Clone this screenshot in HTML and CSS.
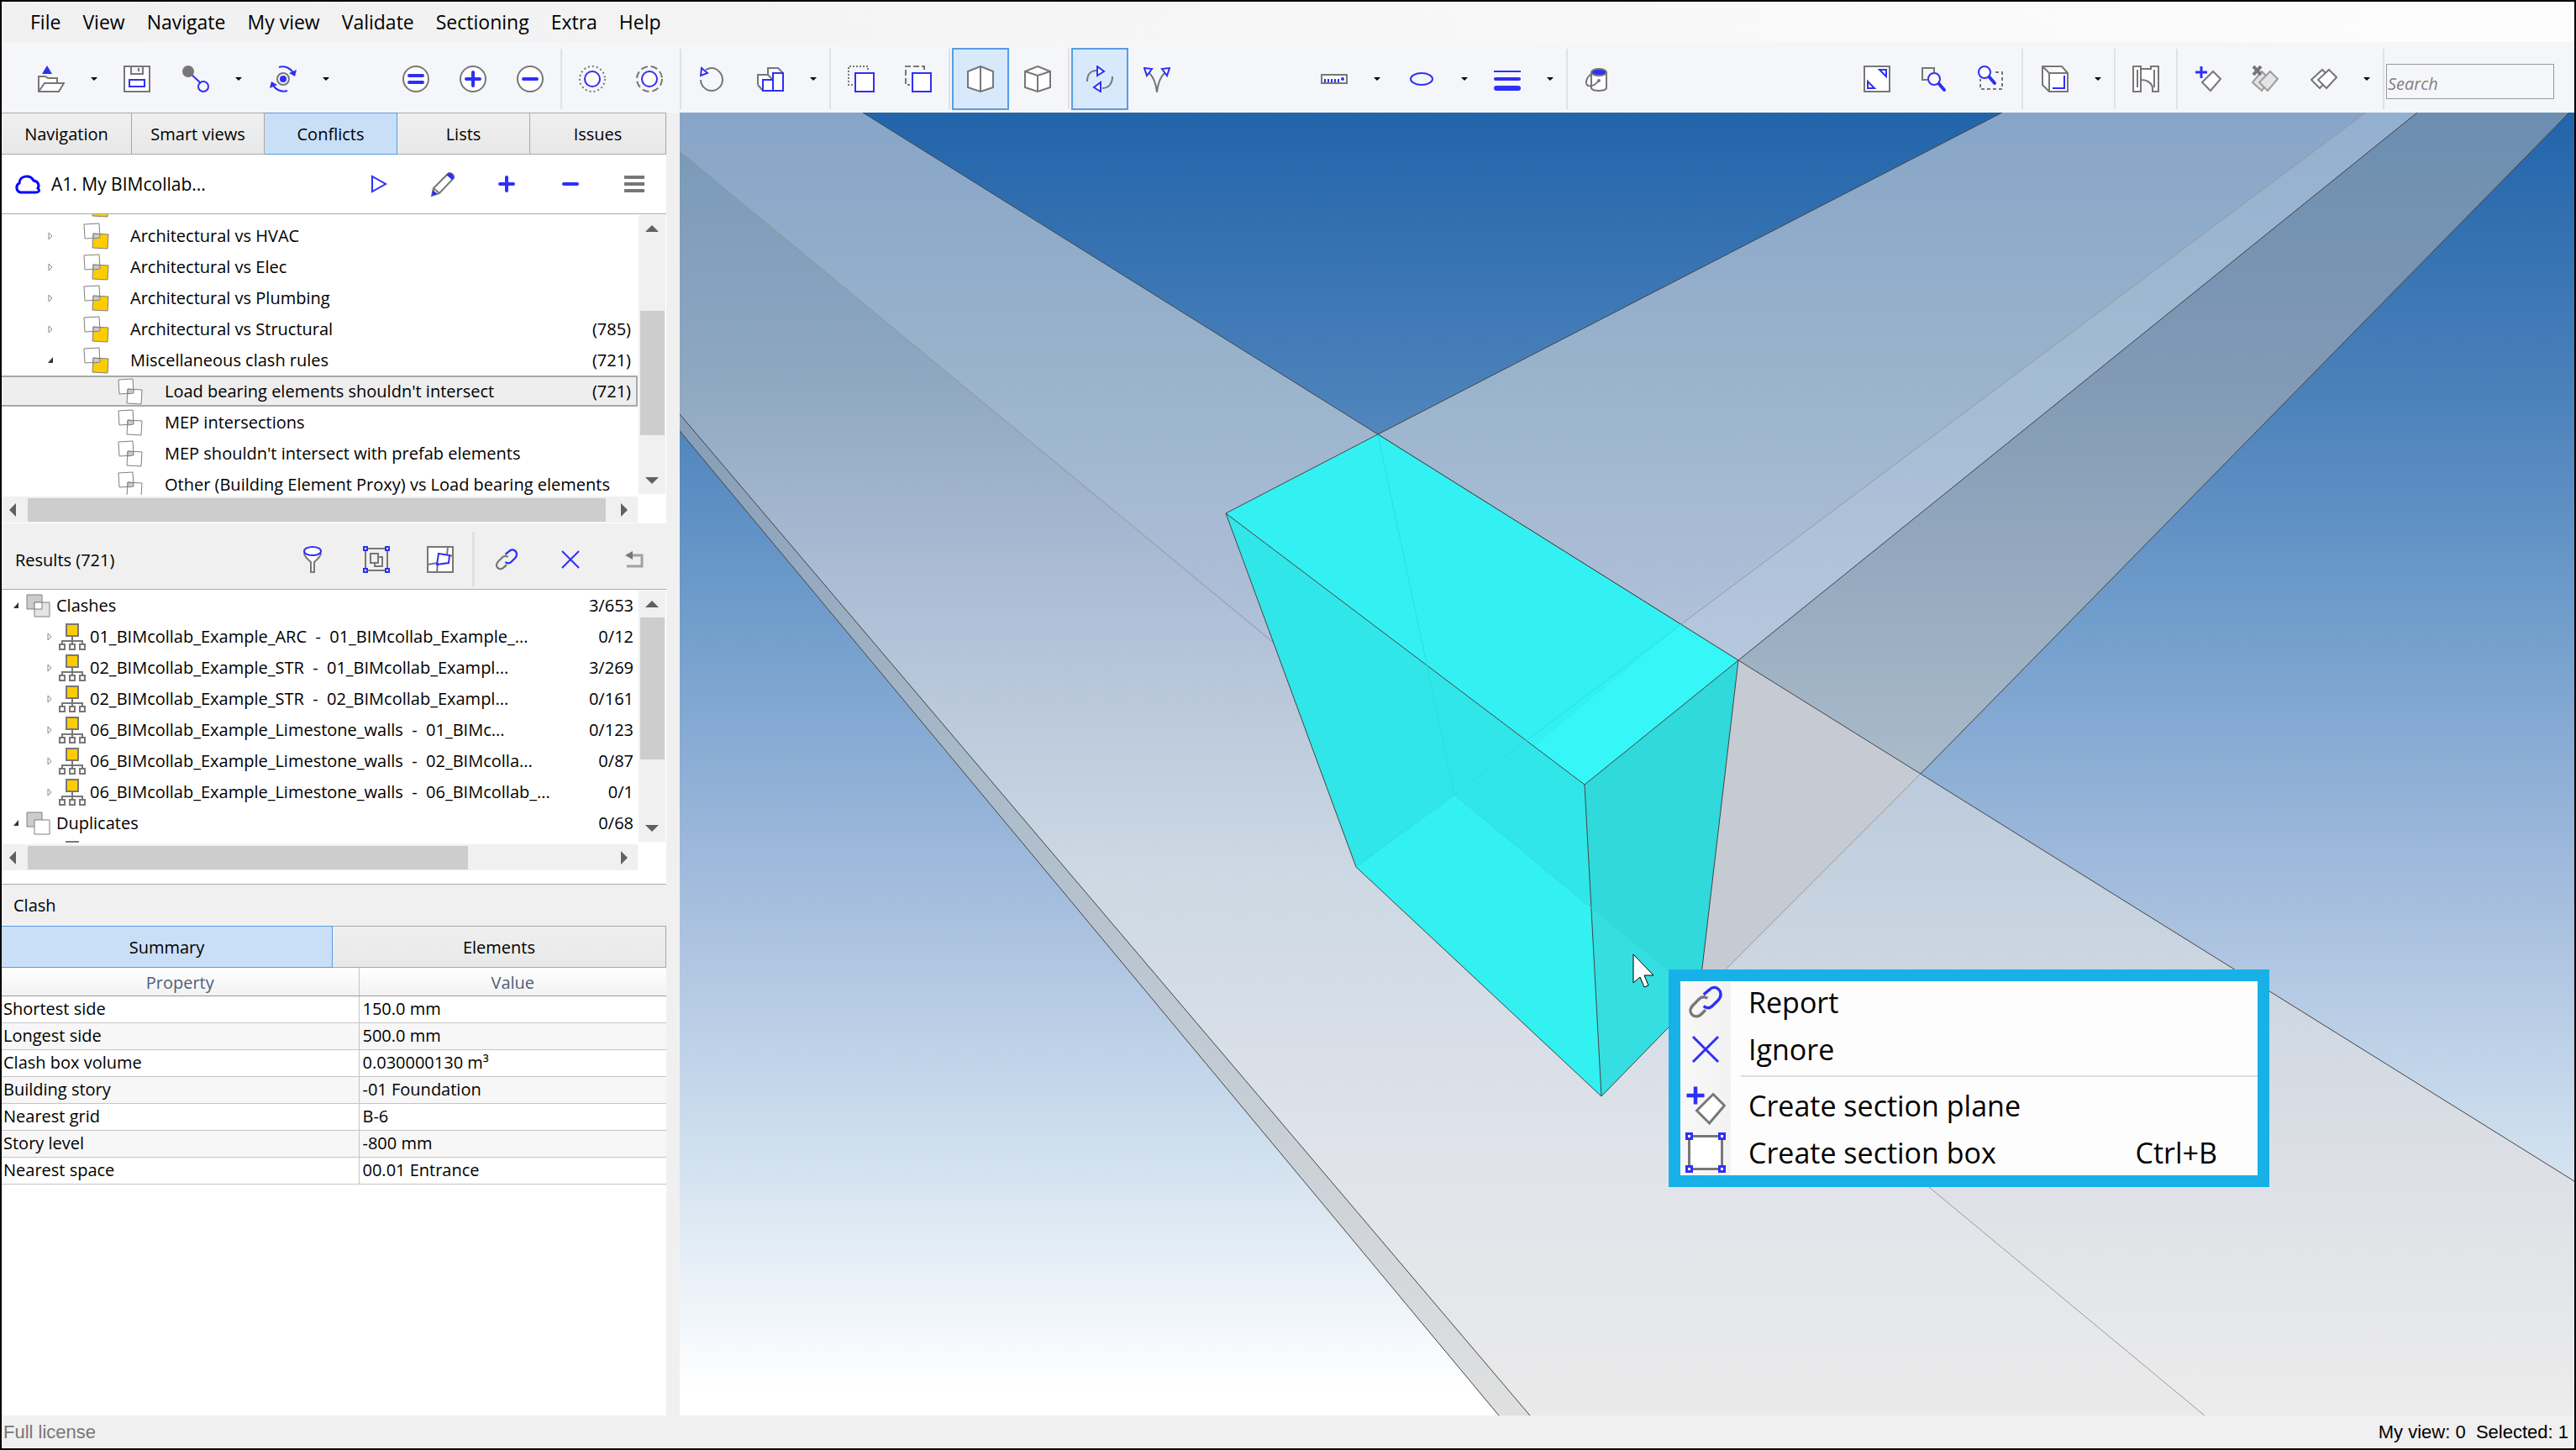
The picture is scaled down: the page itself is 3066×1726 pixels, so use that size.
FILE: index.html
```
<!DOCTYPE html>
<html lang="en">
<head>
    <meta charset="UTF-8">
    <meta name="viewport" content="width=device-width, initial-scale=1.0">
    <title>BIMcollab Zoom</title>
    <link rel="stylesheet" href="styles.css">
</head>
<body>
    <!-- Shared icons -->
    <svg class="sprite" aria-hidden="true">
        <symbol id="closed" viewBox="0 0 8 12"><path class="thin" d="M2 2v8l4-4z"/></symbol>
        <symbol id="open" viewBox="0 0 8 12"><path d="M7 2v7H1z" fill="#333"/></symbol>
        <symbol id="rule-set" viewBox="0 0 32 32">
            <path class="thin" d="M1 2l18-1 1 17-18 1z" fill="#fff"/>
            <path class="thin" d="M12 13l18 1-1 17-18-1z" fill="#fc0"/>
            <path class="thin" d="M12 13l8 1v4l-8 1z" fill="#ccc"/>
        </symbol>
        <symbol id="rule" viewBox="0 0 32 32">
            <path class="thin" d="M1 2l17-1 1 17-17 1z" fill="#fff"/>
            <path class="thin" d="M12 13l17 1-1 17-17-1z" fill="#fff"/>
            <path class="thin" d="M12 13l7 1v4l-7 1z" fill="#ccc"/>
        </symbol>
        <symbol id="clash" viewBox="0 0 32 32">
            <path class="thin" d="M2 3h18v17H2z" fill="#ccc"/>
            <path class="thin" d="M11 12h18v17H11z" fill="#e4e4e4"/>
            <path class="thin" d="M11 12h9v8h-9z" fill="#fff"/>
        </symbol>
        <symbol id="duplicate" viewBox="0 0 32 32">
            <path class="thin" d="M2 3h18v17H2z" fill="#ccc"/>
            <path class="thin" d="M11 12h18v17H11z" fill="#fff"/>
        </symbol>
        <symbol id="group" viewBox="0 0 32 32">
            <path class="g" d="M16 15v7M4 25v-4h24v4M16 21v4"/>
            <path class="g" d="M9 1h14v14H9z" style="fill:#fc0"/>
            <path class="g" d="M1 25h6v6H1zM13 25h6v6h-6zM25 25h6v6h-6z"/>
        </symbol>
        <symbol id="link" viewBox="-5 -5 42 42">
            <path class="g b3" d="M18 12c-3-2-6-2-9 1l-6 6c-4 4-3 8-1 10s6 3 10-1l4-4"/>
            <path class="b3" d="M14 8l6-5c4-4 8-2 10 0s3 7-1 11l-6 6c-3 3-7 2-9 0"/>
        </symbol>
        <symbol id="cross" viewBox="0 0 32 32"><path class="b" d="M6 6l20 20M26 6L6 26"/></symbol>
        <symbol id="plane-add" viewBox="0 0 32 32">
            <path class="g w" d="M22 7l9 9-12 14-10-10z"/>
            <path class="b3" d="M8 1v14M1 8h14"/>
        </symbol>
    </svg>

    <nav class="menubar">
        <a href="#">File</a>
        <a href="#">View</a>
        <a href="#">Navigate</a>
        <a href="#">My view</a>
        <a href="#">Validate</a>
        <a href="#">Sectioning</a>
        <a href="#">Extra</a>
        <a href="#">Help</a>
    </nav>

    <header class="toolbar">
        <div class="group group-file">
            <button class="tool split" aria-label="Open"><svg viewBox="0 0 32 32"><path d="M11 0l6 10H5z" fill="#2f2ff5"/><path class="g w" d="M1 31V13h8l3 2h11v6"/><path class="g w" d="M1 31l7-10h23l-6 10z"/></svg></button>
            <button class="caret" aria-label="Open options"></button>
            <button class="tool" aria-label="Save"><svg viewBox="0 0 32 32"><path class="g w" d="M1 1h30v30H1zM9 1v9h14V1M18 3v4"/><path class="b w" d="M7 17h18v8H7z"/></svg></button>
            <button class="tool split" aria-label="Connect"><svg viewBox="0 0 32 32"><path class="b" d="M9 9l13 12"/><circle cx="7" cy="7" r="7" fill="#777"/><circle class="b" cx="25" cy="25" r="6"/></svg></button>
            <button class="caret" aria-label="Connect options"></button>
            <button class="tool split" aria-label="Synchronise"><svg viewBox="0 0 32 32"><circle class="g" cx="16" cy="16" r="7"/><circle cx="16" cy="16" r="4" fill="#2f2ff5"/><path class="b" d="M11 2c7-2 14 1 17 7M21 30c-7 2-14-1-17-7"/><path d="M32 5l-2 8-7-4zM0 27l2-8 7 4z" fill="#2f2ff5"/></svg></button>
            <button class="caret" aria-label="Synchronise options"></button>
        </div>
        <div class="group">
            <button class="tool" aria-label="Equal"><svg viewBox="0 0 32 32"><circle class="g w" cx="16" cy="16" r="15"/><path class="b4" d="M8 12h16M8 20h16"/></svg></button>
            <button class="tool" aria-label="Add"><svg viewBox="0 0 32 32"><circle class="g w" cx="16" cy="16" r="15"/><path class="b4" d="M16 8v16M8 16h16"/></svg></button>
            <button class="tool" aria-label="Subtract"><svg viewBox="0 0 32 32"><circle class="g w" cx="16" cy="16" r="15"/><path class="b4" d="M8 16h16"/></svg></button>
            <span class="sep"></span>
            <button class="tool" aria-label="Select dotted"><svg viewBox="0 0 32 32"><circle class="g" cx="16" cy="16" r="15" stroke-dasharray="2 3"/><circle class="b w" cx="16" cy="16" r="9"/></svg></button>
            <button class="tool" aria-label="Select dashed"><svg viewBox="0 0 32 32"><circle class="g" cx="16" cy="16" r="15" stroke-dasharray="8 4"/><circle class="b w" cx="16" cy="16" r="9"/></svg></button>
            <span class="sep"></span>
            <button class="tool" aria-label="Undo"><svg viewBox="0 0 32 32"><path class="g" d="M3 17c0 7 6 13 13 13s13-6 13-13S23 3 16 3c-3 0-5 1-7 2"/><path class="b w" d="M4 3l7 6-8 3z"/></svg></button>
            <button class="tool split" aria-label="Buildings"><svg viewBox="0 0 32 32"><path class="g w" d="M1 23V11h12V3h12l6 6v12M1 23l6 7M1 11h12l6 6"/><path class="b w" d="M7 30V17h12V9h12v21zM19 17v13"/></svg></button>
            <button class="caret" aria-label="Building options"></button>
            <span class="sep"></span>
            <button class="tool" aria-label="Box dotted"><svg viewBox="0 0 32 32"><path class="g" d="M24 5V1H1v22h7" stroke-dasharray="2 2"/><path class="b w" d="M9 9h22v22H9z"/></svg></button>
            <button class="tool" aria-label="Box dashed"><svg viewBox="0 0 32 32"><path class="g" d="M23 5V1H1v22h5" stroke-dasharray="7 3"/><path class="b w" d="M9 9h22v22H9z"/></svg></button>
            <span class="sep"></span>
            <button class="tool active" aria-label="Perspective"><svg viewBox="0 0 32 32"><path class="g w" d="M16 1l15 6v19l-15 5-15-5V7zM16 1v30"/></svg></button>
            <button class="tool" aria-label="Isometric"><svg viewBox="0 0 32 32"><path class="g w" d="M16 1l15 6v19l-15 5-15-5V7zM1 7l15 5 15-5M16 12v19"/></svg></button>
            <span class="sep"></span>
            <button class="tool active" aria-label="Orbit"><svg viewBox="0 0 32 32"><path class="g" d="M1 19C1 11 5 6 12 6M31 13c0 8-4 14-12 14"/><path class="b w" d="M13 1l8 6-8 5zM17 20v11l-8-5z"/></svg></button>
            <button class="tool" aria-label="Fly"><svg viewBox="0 0 32 32"><path class="g" d="M7 9c5 5 8 13 9 23 1-10 4-18 9-23"/><path class="b w" d="M1 3l9 1-6 8zM31 3l-9 1 6 8z"/></svg></button>
        </div>
        <div class="group group-draw">
            <button class="tool split" aria-label="Measure"><svg viewBox="0 0 32 32"><path class="g w" d="M1 11h30v10H1z"/><path class="b" d="M5 16v4M9 16v4M13 16v4M17 16v4M21 16v4"/><circle cx="26" cy="16" r="2" fill="#2f2ff5"/></svg></button>
            <button class="caret" aria-label="Measure options"></button>
            <button class="tool split" aria-label="Markup"><svg viewBox="0 0 32 32"><ellipse class="b" cx="16" cy="16" rx="13" ry="7"/></svg></button>
            <button class="caret" aria-label="Markup options"></button>
            <button class="tool" aria-label="Line width"><svg viewBox="0 0 32 32"><path class="b" d="M0 7h32"/><path class="b4" d="M2 16h28"/><path class="b6" d="M3 27h26"/></svg></button>
            <button class="caret" aria-label="Line width options"></button>
            <span class="sep"></span>
            <button class="tool" aria-label="Paint"><svg viewBox="0 0 32 32"><path class="g w" d="M8 8v19c2 4 16 4 18 0V8"/><ellipse class="g" cx="17" cy="8" rx="9" ry="4" style="fill:#2f2ff5"/><path class="g" d="M8 10c-6 4-8 12-4 14 4 1 9-1 13-6"/><circle cx="17" cy="18" r="2" fill="#777"/></svg></button>
        </div>
        <div class="group group-view">
            <button class="tool" aria-label="Fit"><svg viewBox="0 0 32 32"><path class="g w" d="M1 1h30v30H1z"/><path class="b" d="M19 5h8v8zM5 19v8h8z"/></svg></button>
            <button class="tool" aria-label="Zoom object"><svg viewBox="0 0 32 32"><path class="g" d="M8 17H2V3h14v5"/><circle class="b w" cx="16" cy="16" r="7"/><path class="b4" d="M22 22l6 7"/></svg></button>
            <button class="tool" aria-label="Zoom window"><svg viewBox="0 0 32 32"><path class="g" d="M21 8h8v20H3V16" stroke-dasharray="4 3"/><circle class="b w" cx="8" cy="8" r="7"/><path class="b4" d="M14 14l6 7"/></svg></button>
            <span class="sep"></span>
            <button class="tool split" aria-label="View cube"><svg viewBox="0 0 32 32"><path class="g w" d="M1 1h23l7 8v22H9l-8-8zM1 1l8 8h22M9 9v22"/><path class="b" d="M27 12v15H13"/></svg></button>
            <button class="caret" aria-label="View options"></button>
            <span class="sep"></span>
            <button class="tool" aria-label="Walls"><svg viewBox="0 0 32 32"><path class="g w" d="M1 1h9v3h12V1h9v30h-7v-5c-1-5-6-9-14-9v14H1zM6 5v21M26 5v21M10 4v13"/></svg></button>
            <span class="sep"></span>
            <button class="tool" aria-label="Add section plane"><svg><use href="#plane-add"/></svg></button>
            <button class="tool" aria-label="Remove section planes"><svg viewBox="0 0 32 32"><g opacity=".7"><path class="g" d="M12 7l9 9-9 14L1 20z" style="fill:#ddd"/><path class="g" d="M22 7l9 9-12 14L9 20z" style="fill:#ddd"/></g><path d="M2 1l9 10M11 1L2 11" stroke="#777" stroke-width="4"/></svg></button>
            <button class="tool split" aria-label="Section planes"><svg viewBox="0 0 32 32"><path class="g w" d="M14 5l9 9-12 13L1 17z"/><path class="g w" d="M22 5l9 9-12 13-10-10z"/></svg></button>
            <button class="caret" aria-label="Section options"></button>
            <span class="sep"></span>
            <input class="search" type="text" placeholder="Search" aria-label="Search">
        </div>
    </header>

    <main class="workspace">
        <aside class="sidebar">
            <div class="tabs main-tabs">
                <button>Navigation</button>
                <button>Smart views</button>
                <button class="selected">Conflicts</button>
                <button>Lists</button>
                <button>Issues</button>
            </div>

            <div class="panel-bar rules-bar">
                <svg class="cloud" viewBox="0 0 32 32"><path d="M7 26a6 6 0 0 1-1-11c0-9 13-11 17-3 6 1 7 6 5 9 3 3 1 5-2 5z" fill="none" stroke="#0000ff" stroke-width="3"/></svg>
                <span class="panel-name">A1. My BIMcollab...</span>
                <button class="act" aria-label="Run"><svg viewBox="0 0 32 32"><path class="b w" d="M8 7v18l16-9z"/></svg></button>
                <button class="act" aria-label="Edit"><svg viewBox="0 0 32 32"><path class="g w" d="M22 4c2-3 8 1 7 5L12 27l-9 3 2-9z"/><path d="M22 4c2-3 8 1 7 5l-2 2-7-6zM3 30l1-7 6 5z" fill="#2f2ff5"/><path class="g" d="M5 21l7 6"/></svg></button>
                <button class="act" aria-label="Add rule"><svg viewBox="0 0 32 32"><path class="b4" d="M16 8v16M8 16h16"/></svg></button>
                <button class="act" aria-label="Remove rule"><svg viewBox="0 0 32 32"><path class="b4" d="M8 16h16"/></svg></button>
                <button class="act" aria-label="Menu"><svg viewBox="0 0 32 32"><path d="M4 8h24M4 16h24M4 24h24" stroke="#777" stroke-width="4"/></svg></button>
            </div>

            <section class="pane rules">
                <ul class="tree">
                    <li class="scrolled"><svg class="icon"><use href="#rule-set"/></svg></li>
                    <li><svg class="toggle"><use href="#closed"/></svg><svg class="icon"><use href="#rule-set"/></svg><span>Architectural vs HVAC</span></li>
                    <li><svg class="toggle"><use href="#closed"/></svg><svg class="icon"><use href="#rule-set"/></svg><span>Architectural vs Elec</span></li>
                    <li><svg class="toggle"><use href="#closed"/></svg><svg class="icon"><use href="#rule-set"/></svg><span>Architectural vs Plumbing</span></li>
                    <li><svg class="toggle"><use href="#closed"/></svg><svg class="icon"><use href="#rule-set"/></svg><span>Architectural vs Structural</span><b>(785)</b></li>
                    <li><svg class="toggle"><use href="#open"/></svg><svg class="icon"><use href="#rule-set"/></svg><span>Miscellaneous clash rules</span><b>(721)</b></li>
                    <li class="child current"><svg class="icon"><use href="#rule"/></svg><span>Load bearing elements shouldn't intersect</span><b>(721)</b></li>
                    <li class="child"><svg class="icon"><use href="#rule"/></svg><span>MEP intersections</span></li>
                    <li class="child"><svg class="icon"><use href="#rule"/></svg><span>MEP shouldn't intersect with prefab elements</span></li>
                    <li class="child"><svg class="icon"><use href="#rule"/></svg><span>Other (Building Element Proxy) vs Load bearing elements</span></li>
                </ul>
                <div class="vbar"><i class="up"></i><i class="thumb"></i><i class="down"></i></div>
                <div class="hbar"><i class="left"></i><i class="thumb"></i><i class="right"></i></div>
            </section>

            <div class="panel-bar results-bar">
                <span class="panel-name">Results (721)</span>
                <button class="act" aria-label="Filter"><svg viewBox="0 0 32 32"><path class="g w" d="M6 8c0 5 4 7 8 11v12h4V19c4-4 8-6 8-11"/><ellipse class="b w" cx="16" cy="6" rx="10" ry="5"/></svg></button>
                <button class="act" aria-label="Group results"><svg viewBox="0 0 32 32"><path class="g" d="M3 3h26v26H3zM9 9h9v11H9zM18 13h5v11h-9v-4"/><path class="b w" d="M1 1h4v4H1zM27 1h4v4h-4zM1 27h4v4H1zM27 27h4v4h-4z"/></svg></button>
                <button class="act" aria-label="Show on map"><svg viewBox="0 0 32 32"><path class="g w" d="M1 1h30v30H1zM1 22l12-2M27 11l4 1M25 1l-1 9M12 31l1-11"/><path class="b" d="M14 9l13 2-1 9-14 2z"/></svg></button>
                <span class="sep"></span>
                <button class="act" aria-label="Report"><svg><use href="#link"/></svg></button>
                <button class="act" aria-label="Ignore"><svg><use href="#cross"/></svg></button>
                <button class="act" aria-label="Restore"><svg viewBox="0 0 32 32"><path d="M10 11h15v13H7" fill="none" stroke="#a0a0a0" stroke-width="3"/><path d="M5 11l9-5v10z" fill="#777"/></svg></button>
            </div>

            <section class="pane results">
                <ul class="tree">
                    <li><svg class="toggle"><use href="#open"/></svg><svg class="icon"><use href="#clash"/></svg><span>Clashes</span><b>3/653</b></li>
                    <li class="child"><svg class="toggle"><use href="#closed"/></svg><svg class="icon"><use href="#group"/></svg><span>01_BIMcollab_Example_ARC  -  01_BIMcollab_Example_...</span><b>0/12</b></li>
                    <li class="child"><svg class="toggle"><use href="#closed"/></svg><svg class="icon"><use href="#group"/></svg><span>02_BIMcollab_Example_STR  -  01_BIMcollab_Exampl...</span><b>3/269</b></li>
                    <li class="child"><svg class="toggle"><use href="#closed"/></svg><svg class="icon"><use href="#group"/></svg><span>02_BIMcollab_Example_STR  -  02_BIMcollab_Exampl...</span><b>0/161</b></li>
                    <li class="child"><svg class="toggle"><use href="#closed"/></svg><svg class="icon"><use href="#group"/></svg><span>06_BIMcollab_Example_Limestone_walls  -  01_BIMc...</span><b>0/123</b></li>
                    <li class="child"><svg class="toggle"><use href="#closed"/></svg><svg class="icon"><use href="#group"/></svg><span>06_BIMcollab_Example_Limestone_walls  -  02_BIMcolla...</span><b>0/87</b></li>
                    <li class="child"><svg class="toggle"><use href="#closed"/></svg><svg class="icon"><use href="#group"/></svg><span>06_BIMcollab_Example_Limestone_walls  -  06_BIMcollab_...</span><b>0/1</b></li>
                    <li><svg class="toggle"><use href="#open"/></svg><svg class="icon"><use href="#duplicate"/></svg><span>Duplicates</span><b>0/68</b></li>
                    <li class="child"><svg class="toggle"><use href="#closed"/></svg><svg class="icon"><use href="#group"/></svg></li>
                </ul>
                <div class="vbar"><i class="up"></i><i class="thumb"></i><i class="down"></i></div>
                <div class="hbar"><i class="left"></i><i class="thumb"></i><i class="right"></i></div>
            </section>

            <h2>Clash</h2>
            <div class="tabs detail-tabs">
                <button class="selected">Summary</button>
                <button>Elements</button>
            </div>
            <table class="props">
                <thead>
                    <tr><th>Property</th><th>Value</th></tr>
                </thead>
                <tbody>
                    <tr><td>Shortest side</td><td>150.0 mm</td></tr>
                    <tr><td>Longest side</td><td>500.0 mm</td></tr>
                    <tr><td>Clash box volume</td><td>0.030000130 m³</td></tr>
                    <tr><td>Building story</td><td>-01 Foundation</td></tr>
                    <tr><td>Nearest grid</td><td>B-6</td></tr>
                    <tr><td>Story level</td><td>-800 mm</td></tr>
                    <tr><td>Nearest space</td><td>00.01 Entrance</td></tr>
                </tbody>
            </table>
        </aside>

        <section class="viewer">
            <svg class="scene" viewBox="0 0 2255 1551" preserveAspectRatio="xMidYMid slice">
                <defs>
                    <linearGradient id="beam" gradientUnits="userSpaceOnUse" x1="0" y1="0" x2="0" y2="1551">
                        <stop offset="0" stop-color="#87a5c8"/>
                        <stop offset=".2" stop-color="#9ab3cc"/>
                        <stop offset=".38" stop-color="#aebfd8"/>
                        <stop offset=".58" stop-color="#c3d1df"/>
                        <stop offset=".8" stop-color="#dcdfe5"/>
                        <stop offset="1" stop-color="#ececec"/>
                    </linearGradient>
                    <linearGradient id="face" gradientUnits="userSpaceOnUse" x1="0" y1="0" x2="0" y2="1551">
                        <stop offset="0" stop-color="#7797b8"/>
                        <stop offset=".2" stop-color="#8ea7c1"/>
                        <stop offset=".38" stop-color="#b0bfd7"/>
                        <stop offset=".58" stop-color="#ccd8e3"/>
                        <stop offset=".8" stop-color="#e0e3ea"/>
                        <stop offset="1" stop-color="#eaeaea"/>
                    </linearGradient>
                    <linearGradient id="side" gradientUnits="userSpaceOnUse" x1="0" y1="0" x2="0" y2="1551">
                        <stop offset="0" stop-color="#6c8eb0"/>
                        <stop offset=".2" stop-color="#8199b5"/>
                        <stop offset=".5" stop-color="#a9bac9"/>
                        <stop offset="1" stop-color="#e0e0e0"/>
                    </linearGradient>
                </defs>
                <!-- left beam -->
                <path d="M0 0H218L831 383 1260 652 2255 1272V1551H1815L0 46z" fill="url(#beam)"/>
                <path d="M0 46L1815 1551H1012L0 359z" fill="url(#face)"/>
                <path d="M0 359L1012 1551H975L0 379z" fill="url(#side)"/>
                <!-- right beam -->
                <path d="M1574 0H2068L1260 652 831 383z" fill="url(#beam)"/>
                <path d="M2007 0H2068L1260 652 1192 609z" fill="#c8daf0" fill-opacity=".2"/>
                <path d="M2068 0H2249L1477 787 1260 652z" fill="url(#side)"/>
                <path d="M1260 652l217 135-264 265z" fill="#c6cbd3"/>
                <g class="edges">
                    <path d="M218 0L831 383 1260 652 2255 1272M0 359l1012 1192M0 379l975 1172M1574 0L831 383M2068 0L1260 652M2249 0L1477 787"/>
                    <path class="hidden" d="M0 46l707 585M1213 1052L1815 1551M2007 0L1192 609M1477 787l-264 265"/>
                </g>
                <!-- clash volume -->
                <path d="M650 477L831 383 1260 652 1077 800z" fill="#33f1f3"/>
                <path d="M1192 609l68 43-183 148-60-45z" fill="#36f6f8"/>
                <path d="M650 477l427 323 20 371-292-273z" fill="#31e6e9"/>
                <path d="M922 812l163 135 12 224-292-273z" fill="#33f0f1"/>
                <path d="M1077 800l183-148-47 400-116 119z" fill="#30d9db"/>
                <path d="M1085 947l128 105-116 119z" fill="#35dfe1"/>
                <g class="edges">
                    <path d="M650 477L831 383 1260 652 1077 800zM1077 800l20 371M650 477l155 421 292 273 116-119 47-400"/>
                    <path class="faint" d="M831 383l91 429-117 86M922 812l291 240M922 812l270-203"/>
                </g>
                <path d="M1135 1002v34l8-7 5 12 5-2-5-12h11z" fill="#fff" stroke="#000" stroke-width="1"/>
            </svg>

            <div class="context-menu">
                <button><svg><use href="#link"/></svg><span>Report</span></button>
                <button><svg><use href="#cross"/></svg><span>Ignore</span></button>
                <hr>
                <button><svg><use href="#plane-add"/></svg><span>Create section plane</span></button>
                <button><svg viewBox="0 0 32 32"><path class="g w" d="M3 3h26v26H3z"/><path class="b w" d="M1 1h4v4H1zM27 1h4v4h-4zM1 27h4v4H1zM27 27h4v4h-4z"/></svg><span>Create section box</span><kbd>Ctrl+B</kbd></button>
            </div>
        </section>
    </main>

    <footer class="statusbar">
        <span class="license">Full license</span>
        <span>My view: 0&nbsp; Selected: 1</span>
    </footer>
</body>
</html>
```
FILE: styles.css
```
* {
    box-sizing: border-box;
}
body {
    margin: 0;
    height: 100vh;
    display: flex;
    flex-direction: column;
    overflow: hidden;
    border: 2px solid #000;
    background-color: #f0f0f0;
    font-family: "Open Sans", "Noto Sans", sans-serif;
    font-size: 20px;
    color: #000;
}
button {
    padding: 0;
    border: none;
    background: none;
    font: inherit;
    color: inherit;
}
svg {
    display: block;
    flex: none;
    width: 32px;
    height: 32px;
}
.sprite {
    position: absolute;
    width: 0;
    height: 0;
}

/* icon strokes */
.b, .b3, .b4, .b6, .g {
    fill: none;
    stroke: #2f2ff5;
    stroke-width: 2;
}
.g {
    stroke: #777;
}
.w {
    fill: #fff;
}
.b3 {
    stroke-width: 3;
}
.b4 {
    stroke-width: 4;
    stroke-linecap: round;
}
.b6 {
    stroke-width: 6;
    stroke-linecap: round;
}
.thin {
    stroke: #808080;
    stroke-width: 1;
}
#closed .thin {
    fill: none;
    stroke: #888;
}

/* menu bar */
.menubar {
    display: flex;
    align-items: center;
    gap: 26px;
    height: 48px;
    padding-left: 34px;
    background: linear-gradient(to right, #f0f0f0, #fdfdfd);
    font-size: 23px;
}
.menubar a {
    color: #000;
    text-decoration: none;
}

/* toolbar */
.toolbar {
    display: flex;
    align-items: center;
    height: 84px;
    padding-top: 4px;
    background-color: #f5f6f9;
}
.group {
    display: flex;
    align-items: center;
}
.group-file {
    margin: 0 56px 0 23px;
}
.group-draw {
    margin-left: 141px;
}
.group-view {
    margin-left: auto;
    margin-right: 24px;
}
.tool {
    display: flex;
    align-items: center;
    justify-content: center;
    width: 68px;
    height: 74px;
}
.tool.active {
    border: 2px solid #569de5;
    background-color: #d9e9fc;
}
.split {
    margin-left: 2px;
}
.caret {
    width: 34px;
    height: 74px;
}
.caret::before {
    content: "";
    display: block;
    margin: 0 auto;
    width: 0;
    border: 4px solid transparent;
    border-top-color: #000;
    border-bottom: none;
}
.sep {
    width: 2px;
    height: 72px;
    margin: 0 2px;
    background-color: #e0e1e4;
}
.search {
    width: 200px;
    height: 42px;
    margin-top: 6px;
    padding: 4px 1px 0;
    border: 1px solid #999;
    background: none;
    font: italic 20px "Open Sans", sans-serif;
}
.search::placeholder {
    color: #808080;
}

/* sidebar */
.workspace {
    display: flex;
    flex: 1;
    min-height: 0;
}
.sidebar {
    flex: none;
    width: 791px;
    margin-right: 16px;
    background-color: #fff;
}
.tabs {
    display: grid;
    height: 50px;
}
.main-tabs {
    grid-template-columns: 155px repeat(3, 158px) 1fr;
}
.detail-tabs {
    grid-template-columns: 394px 1fr;
}
.tabs button {
    border: 1px solid #a8a8a8;
    border-left: none;
    background: linear-gradient(#efefef, #e8e8e8);
}
.tabs .selected {
    border-color: #569de5;
    background: #c9dff8;
}
.panel-bar {
    display: flex;
    align-items: center;
    height: 71px;
    border-bottom: 1px solid #aaa;
}
.rules-bar {
    padding-left: 15px;
    font-size: 21px;
}
.results-bar {
    height: 79px;
    padding: 8px 0 0 16px;
    background-color: #f0f0f0;
}
.results-bar .sep {
    width: 3px;
    height: 66px;
    margin: 0;
}
.cloud {
    margin-right: 12px;
}
.panel-name {
    flex: 1;
}
.act {
    display: flex;
    justify-content: center;
    width: 76px;
}

.pane {
    display: grid;
    grid-template-columns: 1fr 34px;
    grid-template-rows: 334px 34px;
}
.results {
    grid-template-rows: 301px 49px;
    border-bottom: 1px solid #aaa;
}
.tree {
    margin: 0;
    padding: 0;
    overflow: hidden;
    list-style: none;
}
.tree li {
    display: flex;
    align-items: center;
    height: 37px;
    padding: 0 8px 0 54px;
    white-space: pre;
}
.rules .tree .child {
    padding-left: 138px;
}
.rules .tree .current {
    border: 2px solid #a8a8a8;
    border-left: none;
    padding-right: 6px;
    background-color: #eee;
}
.rules .tree .scrolled {
    align-items: flex-end;
    height: 7px;
    padding: 0 0 3px 62px;
    overflow: hidden;
}
.rules .icon {
    margin: 0 24px 0 35px;
}
.rules .child .icon {
    margin-left: 0;
}
.results .tree li {
    padding: 0 5px 0 13px;
}
.results .tree .child {
    padding-left: 53px;
}
.results .icon {
    margin: 0 5px 0 7px;
}
.toggle {
    width: 8px;
    height: 12px;
}
.tree b {
    margin-left: auto;
    font-weight: normal;
}

/* scroll bars */
.vbar, .hbar {
    display: flex;
    align-items: center;
    background-color: #f0f0f0;
}
.vbar {
    flex-direction: column;
    margin: 1px;
}
.hbar {
    height: 31px;
    margin-top: 2px;
}
.thumb {
    background-color: #cdcdcd;
}
.vbar .thumb {
    width: 29px;
    height: 148px;
    margin: 94px 0 auto;
}
.hbar .thumb {
    width: 688px;
    height: 28px;
    margin: 0 auto 0 14px;
}
.results .vbar .thumb {
    height: 169px;
    margin-top: 12px;
}
.results .hbar .thumb {
    width: 524px;
}
.up, .down, .left, .right {
    border: 8px solid transparent;
}
.up {
    margin-top: 12px;
    border-top: none;
    border-bottom-color: #606060;
}
.down {
    margin-bottom: 12px;
    border-bottom: none;
    border-top-color: #606060;
}
.left {
    margin-left: 9px;
    border-left: none;
    border-right-color: #606060;
}
.right {
    margin-right: 12px;
    border-right: none;
    border-left-color: #606060;
}

/* clash details */
h2 {
    display: flex;
    align-items: center;
    height: 49px;
    margin: 0;
    padding-left: 14px;
    background-color: #f0f0f0;
    font-size: 20px;
    font-weight: normal;
}
.props {
    width: 100%;
    table-layout: fixed;
    border-collapse: collapse;
    line-height: 24px;
}
.props th {
    height: 33px;
    padding: 4px 0 0;
    border-bottom: 1px solid #999;
    background: linear-gradient(#fff, #f2f2f2);
    color: #4c607a;
    font-weight: normal;
}
.props th:first-child {
    width: 425px;
}
.props td {
    height: 32px;
    padding: 0 2px;
    border-bottom: 1px solid #c4c4c4;
}
.props th + th, .props td + td {
    border-left: 1px solid #c4c4c4;
}
.props td + td {
    padding-left: 4px;
}
.props tbody tr:nth-child(even) {
    background-color: #f7f7f7;
}

/* 3D view */
.viewer {
    position: relative;
    flex: 1;
    min-width: 0;
    background: linear-gradient(#2264aa 0%, #4c82bb 22%, #6f9ccb 38%, #a9c0df 62%, #c9dbec 77%, #fff 98%);
}
.scene {
    width: 100%;
    height: 100%;
}
.edges path {
    fill: none;
    stroke: #444;
    stroke-width: 1;
}
.edges .hidden {
    stroke: #999;
}
.edges .faint {
    stroke: #2fdcdf;
}
.context-menu {
    position: absolute;
    left: 1177px;
    top: 1020px;
    display: flex;
    flex-direction: column;
    gap: 4px;
    width: 715px;
    border: 14px solid #18b1e7;
    background: linear-gradient(to right, #f8f8f8 0, #f2f2f2 60px, #fdfdfd 60px);
    font-size: 34px;
}
.context-menu button {
    display: flex;
    align-items: center;
    gap: 27px;
    height: 52px;
    padding: 0 48px 2px 6px;
    text-align: left;
    line-height: 40px;
}
.context-menu svg {
    width: 48px;
    height: 48px;
}
.context-menu hr {
    width: 615px;
    height: 2px;
    margin: 0 0 5px auto;
    border: none;
    background-color: #ddd;
}
.context-menu kbd {
    margin-left: auto;
    font: inherit;
}

/* status bar */
.statusbar {
    display: flex;
    justify-content: space-between;
    height: 39px;
    padding: 6px 7px 0 2px;
    font: 22px/28px "Liberation Sans", Arial, sans-serif;
}
.license {
    color: #777;
}
```
